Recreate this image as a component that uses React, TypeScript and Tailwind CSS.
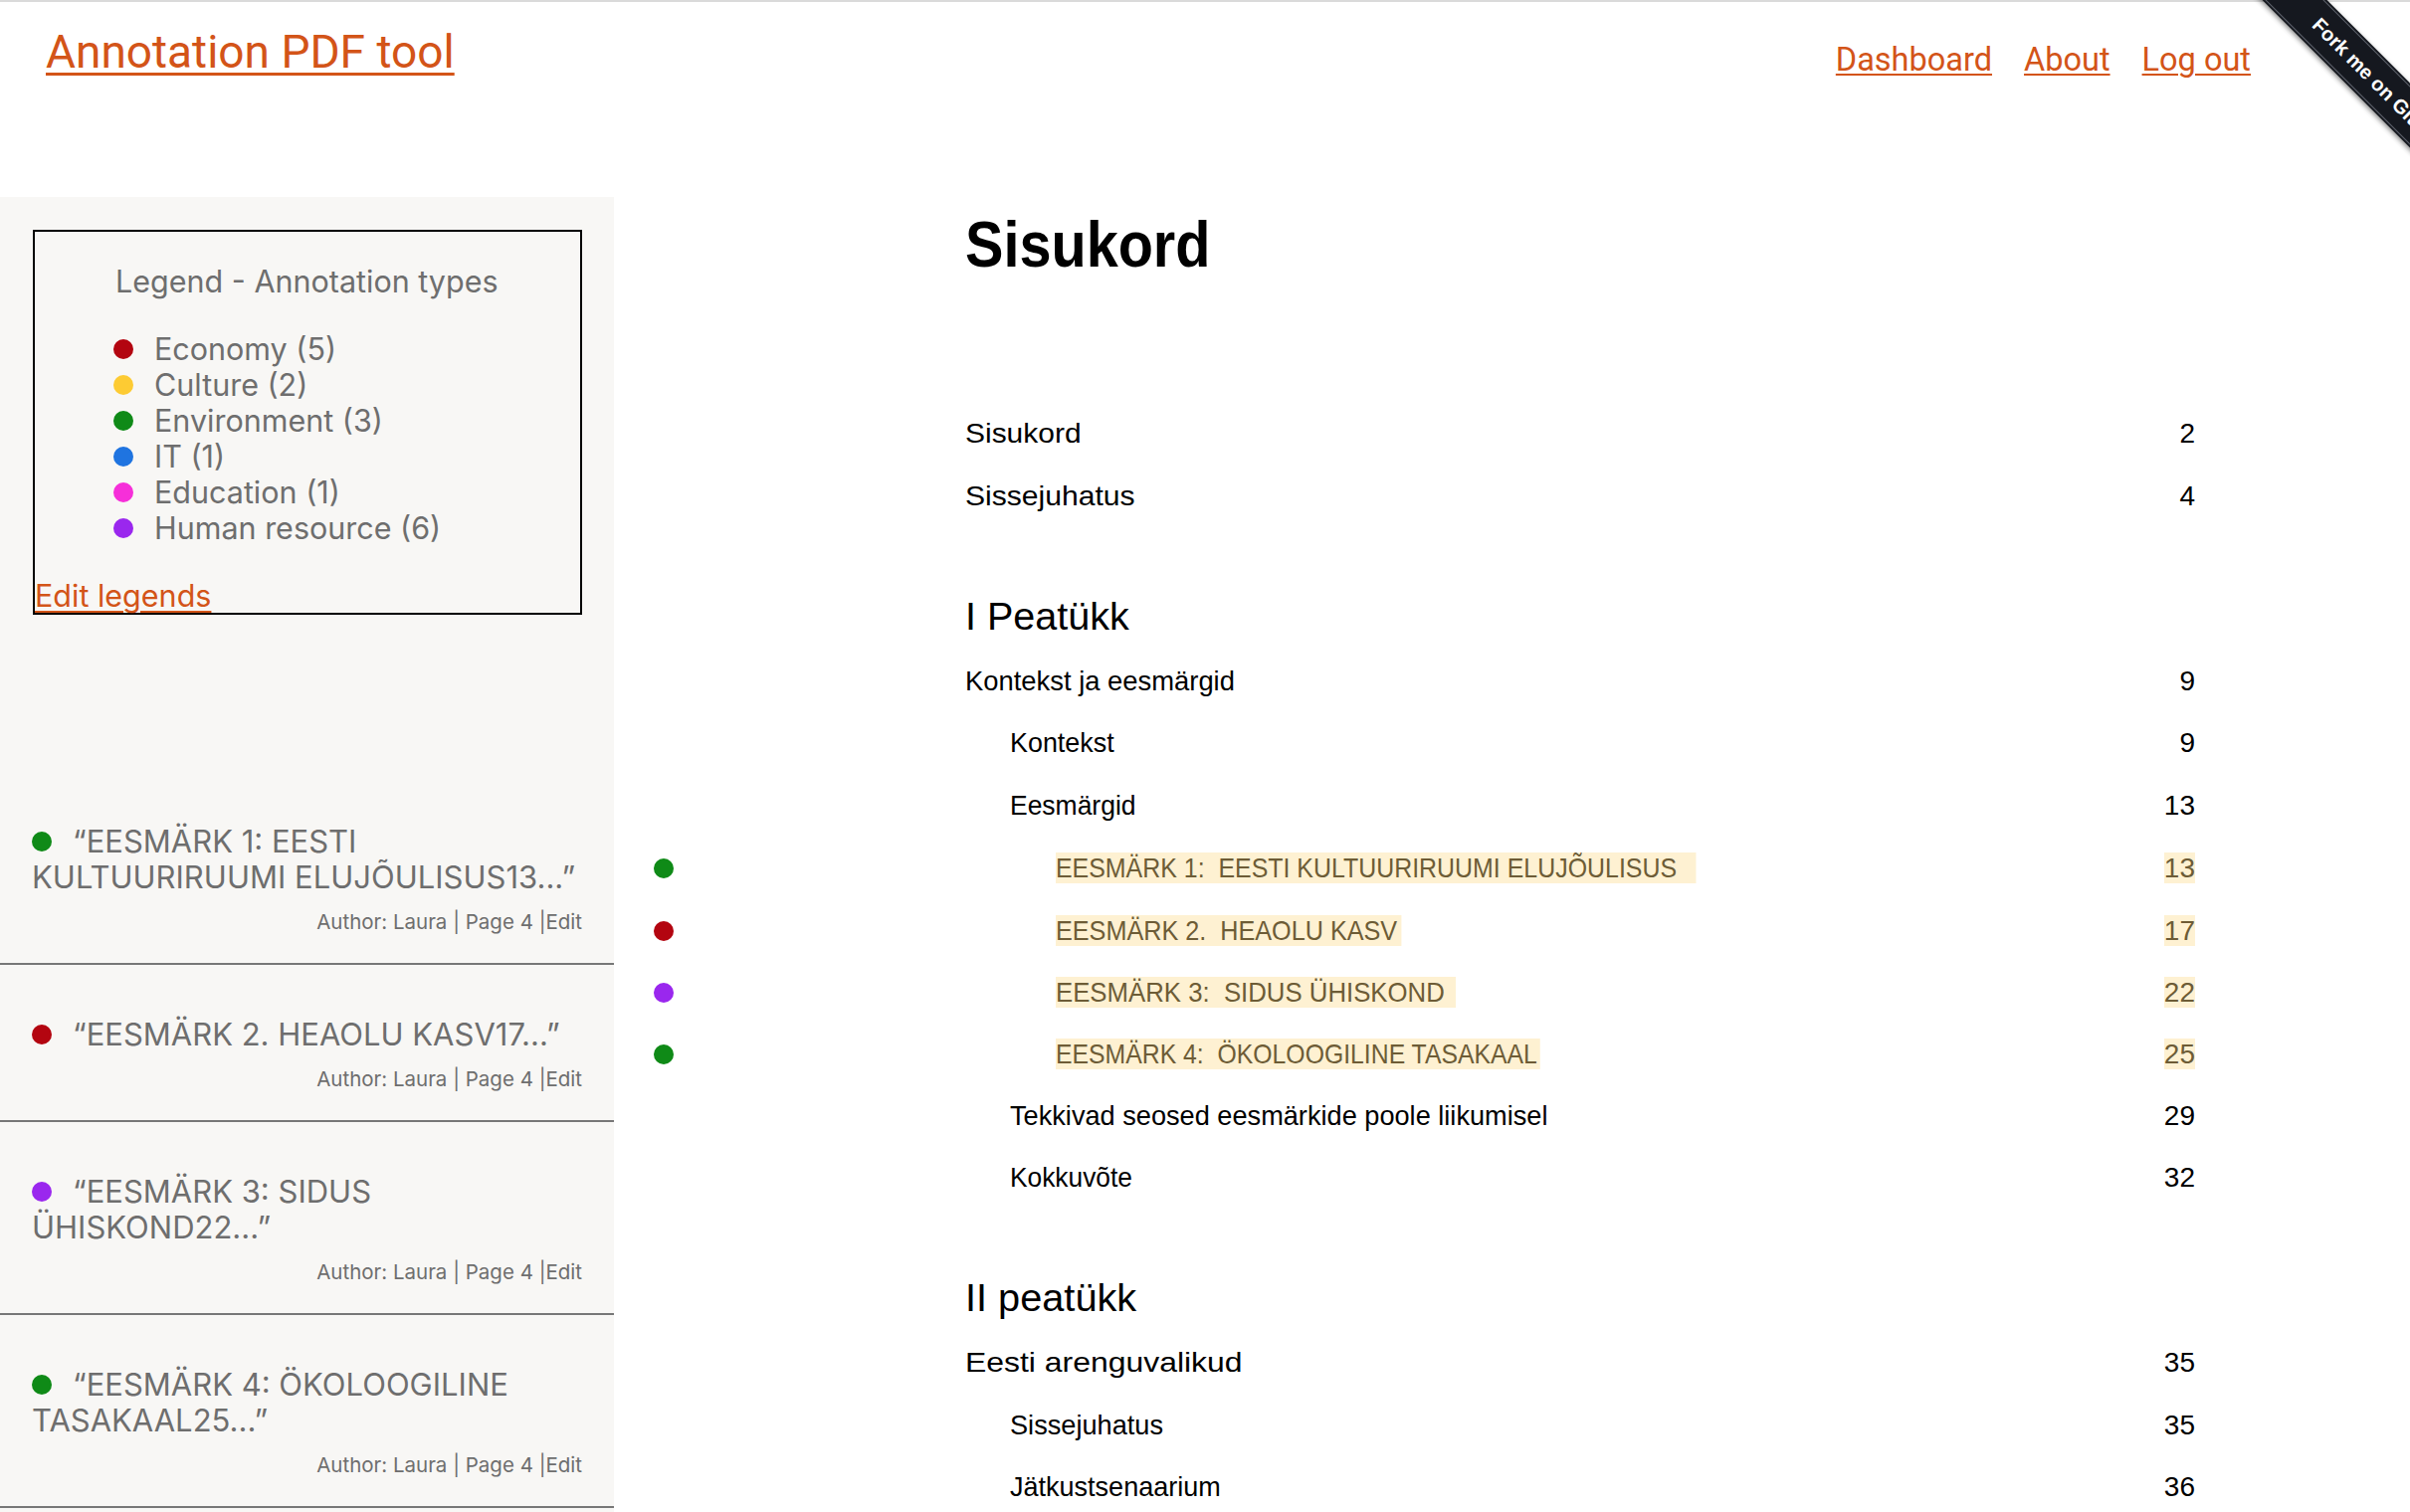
import React from "react";

type Legend = { label: string; dot: string };
const legends: Legend[] = [
  { label: "Economy (5)", dot: "bg-[#b30510]" },
  { label: "Culture (2)", dot: "bg-[#fdcb33]" },
  { label: "Environment (3)", dot: "bg-[#0f8a17]" },
  { label: "IT (1)", dot: "bg-[#1f74e0]" },
  { label: "Education (1)", dot: "bg-[#f62fd9]" },
  { label: "Human resource (6)", dot: "bg-[#9a27ee]" },
];

type Ann = { lines: string[]; dot: string };
const anns: Ann[] = [
  { lines: ["\u201CEESMÄRK 1: EESTI", "KULTUURIRUUMI ELUJÕULISUS13...\u201D"], dot: "bg-[#0f8a17]" },
  { lines: ["\u201CEESMÄRK 2. HEAOLU KASV17...\u201D"], dot: "bg-[#b30510]" },
  { lines: ["\u201CEESMÄRK 3: SIDUS", "ÜHISKOND22...\u201D"], dot: "bg-[#9a27ee]" },
  { lines: ["\u201CEESMÄRK 4: ÖKOLOOGILINE", "TASAKAAL25...\u201D"], dot: "bg-[#0f8a17]" },
];

type Row =
  | { kind: "heading"; text: string; sx: string }
  | {
      kind: "row";
      text: string;
      page: string;
      level: 0 | 1 | 2;
      sx: string;
      dot?: string;
      hl?: boolean;
      pad?: string;
    };

const rows: Row[] = [
  { kind: "row", text: "Sisukord", page: "2", level: 0, sx: "scale-x-[1.07]" },
  { kind: "row", text: "Sissejuhatus", page: "4", level: 0, sx: "scale-x-[1.075]" },
  { kind: "heading", text: "I Peatükk", sx: "scale-x-[1.04]" },
  { kind: "row", text: "Kontekst ja eesmärgid", page: "9", level: 0, sx: "scale-x-[0.978]" },
  { kind: "row", text: "Kontekst", page: "9", level: 1, sx: "scale-x-[0.96]" },
  { kind: "row", text: "Eesmärgid", page: "13", level: 1, sx: "scale-x-[0.945]" },
  {
    kind: "row",
    text: "EESMÄRK 1:\u00A0\u00A0EESTI KULTUURIRUUMI ELUJÕULISUS",
    page: "13",
    level: 2,
    dot: "bg-[#0f8a17]",
    hl: true,
    pad: "pr-[22px]",
    sx: "scale-x-[0.89]",
  },
  {
    kind: "row",
    text: "EESMÄRK 2.\u00A0\u00A0HEAOLU KASV",
    page: "17",
    level: 2,
    dot: "bg-[#b30510]",
    hl: true,
    pad: "pr-[5px]",
    sx: "scale-x-[0.9]",
  },
  {
    kind: "row",
    text: "EESMÄRK 3:\u00A0\u00A0SIDUS ÜHISKOND",
    page: "22",
    level: 2,
    dot: "bg-[#9a27ee]",
    hl: true,
    pad: "pr-[12px]",
    sx: "scale-x-[0.92]",
  },
  {
    kind: "row",
    text: "EESMÄRK 4:\u00A0\u00A0ÖKOLOOGILINE TASAKAAL",
    page: "25",
    level: 2,
    dot: "bg-[#0f8a17]",
    hl: true,
    pad: "pr-[3px]",
    sx: "scale-x-[0.885]",
  },
  { kind: "row", text: "Tekkivad seosed eesmärkide poole liikumisel", page: "29", level: 1, sx: "scale-x-[0.97]" },
  { kind: "row", text: "Kokkuvõte", page: "32", level: 1, sx: "scale-x-[0.94]" },
  { kind: "heading", text: "II peatükk", sx: "scale-x-[1.045]" },
  { kind: "row", text: "Eesti arenguvalikud", page: "35", level: 0, sx: "scale-x-[1.14]" },
  { kind: "row", text: "Sissejuhatus", page: "35", level: 1, sx: "scale-x-[0.97]" },
  { kind: "row", text: "Jätkustsenaarium", page: "36", level: 1, sx: "scale-x-[0.965]" },
];

const levelPad = ["pl-0", "pl-[45px]", "pl-[91px]"];

function Ribbon() {
  return (
    <div className="pointer-events-none absolute right-0 top-0 z-10 h-[200px] w-[200px] overflow-hidden">
      <div className="absolute left-[8.5px] top-[62px] flex h-[46px] w-[320px] rotate-45 items-center justify-center bg-[#15181f] shadow-[0_2px_5px_rgba(0,0,0,0.45)]">
        <div className="absolute inset-x-0 top-[2px] h-px bg-[#5d626b]" />
        <div className="absolute inset-x-0 bottom-[2px] h-px bg-[#5d626b]" />
        <span className="font-['Liberation_Sans',Arial,sans-serif] text-[20px] font-bold leading-none text-white">
          Fork me on GitHub
        </span>
      </div>
    </div>
  );
}

function TocRow({ r }: { r: Row }) {
  if (r.kind === "heading") {
    return (
      <div className="mb-[4px] mt-[58px] flex h-[62px] items-center">
        <div className="w-[353px] shrink-0" />
        <div className={"inline-block origin-left text-[38px] leading-none " + r.sx}>{r.text}</div>
      </div>
    );
  }
  return (
    <div className="flex h-[62.4px] items-center">
      <div className="w-[353px] shrink-0 pl-[40px]">
        {r.dot ? <span className={"block h-5 w-5 rounded-full " + r.dot} /> : null}
      </div>
      <div className={"min-w-0 flex-1 whitespace-nowrap " + levelPad[r.level]}>
        {r.hl ? (
          <span
            className={
              "inline-block h-[31px] origin-left bg-[#fef1d2] text-[28px] leading-[31px] text-[#6d5c36] " +
              r.sx +
              " " +
              (r.pad ?? "")
            }
          >
            {r.text}
          </span>
        ) : (
          <span className={"inline-block origin-left text-[28px] leading-none " + r.sx}>{r.text}</span>
        )}
      </div>
      <div className="text-right">
        {r.hl ? (
          <span className="inline-block h-[31px] bg-[#fef1d2] text-[28px] leading-[31px] text-[#6d5c36]">
            {r.page}
          </span>
        ) : (
          <span className="text-[28px] leading-none">{r.page}</span>
        )}
      </div>
    </div>
  );
}

export default function App() {
  return (
    <div className="relative min-h-screen w-full overflow-hidden bg-white">
      <div className="h-[2px] w-full bg-[#dadada]" />
      <Ribbon />
      <header className="flex h-[196px] items-start justify-between pl-[46px] pr-[160px] font-['Roboto',Arial,sans-serif] text-[#d35418]">
        <a href="#" className="mt-[27px] text-[46px] leading-none underline decoration-[3px] underline-offset-[5px]">
          Annotation PDF tool
        </a>
        <nav className="mt-[42px] flex gap-[32px] text-[32.5px] leading-none">
          <a href="#" className="underline decoration-2 underline-offset-[3px]">
            Dashboard
          </a>
          <a href="#" className="underline decoration-2 underline-offset-[3px]">
            About
          </a>
          <a href="#" className="underline decoration-2 underline-offset-[3px]">
            Log out
          </a>
        </nav>
      </header>

      <div className="flex">
        <aside className="min-h-[1400px] w-[617px] shrink-0 bg-[#f8f7f5] pb-10 font-['Inter','Noto_Sans',sans-serif] text-[#6e6e6e]">
          <div className="ml-[33px] mt-[33px] w-[552px] border-2 border-black pt-[32px]">
            <div className="pl-[81px] text-[30.5px] leading-[36px]">Legend - Annotation types</div>
            <ul className="mt-[32px] pl-[79px]">
              {legends.map((l) => (
                <li key={l.label} className="flex h-[36px] items-center text-[30.5px] leading-[36px]">
                  <span className={"mr-[21px] h-5 w-5 shrink-0 rounded-full " + l.dot} />
                  {l.label}
                </li>
              ))}
            </ul>
            <a href="#" className="mt-[33px] block text-[30.5px] leading-[34px] text-[#d35418] underline decoration-2 underline-offset-[4px]">
              Edit legends
            </a>
          </div>

          <div className="mt-[158px]">
            {anns.map((a, i) => (
              <div key={i} className="border-b-2 border-[#777777] pb-[28px] pl-[32px] pr-[32px] pt-[52px]">
                <div className="text-[31px] leading-[36px]">
                  {a.lines.map((ln, j) => (
                    <div key={j} className="flex items-center whitespace-nowrap">
                      {j === 0 ? <span className={"mr-[21px] h-5 w-5 shrink-0 rounded-full " + a.dot} /> : null}
                      {ln}
                    </div>
                  ))}
                </div>
                <div className="mt-[14px] text-right text-[20.5px] leading-[26px]">Author: Laura | Page 4 |Edit</div>
              </div>
            ))}
          </div>
        </aside>

        <main className="min-w-0 flex-1 pr-[216px] font-['Liberation_Sans',Arial,sans-serif] text-black">
          <div className="pl-[353px]">
            <h1 className="mt-[16px] inline-block h-[64px] origin-left scale-x-90 text-[64px] font-bold leading-none">
              Sisukord
            </h1>
          </div>
          <div className="mt-[128px]">
            {rows.map((r, i) => (
              <TocRow key={i} r={r} />
            ))}
          </div>
        </main>
      </div>
    </div>
  );
}
